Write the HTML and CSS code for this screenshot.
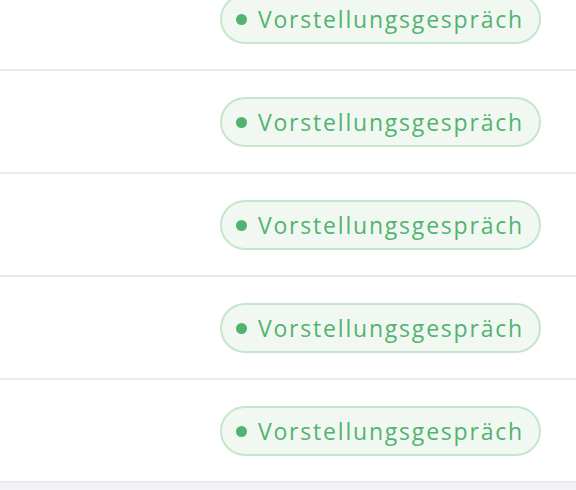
FILE: index.html
```html
<!DOCTYPE html>
<html lang="de">
<head>
<meta charset="utf-8">
<link rel="stylesheet" href="styles.css">
</head>
<body>
<ul class="list">
  <li class="row"><span class="badge"><span class="dot"></span><span class="label">Vorstellungsgespräch</span></span></li>
  <li class="row"><span class="badge"><span class="dot"></span><span class="label">Vorstellungsgespräch</span></span></li>
  <li class="row"><span class="badge"><span class="dot"></span><span class="label">Vorstellungsgespräch</span></span></li>
  <li class="row"><span class="badge"><span class="dot"></span><span class="label">Vorstellungsgespräch</span></span></li>
  <li class="row"><span class="badge"><span class="dot"></span><span class="label">Vorstellungsgespräch</span></span></li>
</ul>
</body>
</html>
```
FILE: styles.css
```css
html, body {
  margin: 0;
  padding: 0;
  background: #f2f3f7;
  font-family: "Open Sans", "Liberation Sans", sans-serif;
  overflow: hidden;
}
.list {
  list-style: none;
  margin: -32px 0 0 0;
  padding: 0;
  background: #ffffff;
}
.row {
  display: flex;
  justify-content: flex-end;
  padding: 26px 35px 25px 0;
  border-bottom: 2px solid #e9e9ee;
}
.badge {
  box-sizing: border-box;
  display: inline-flex;
  align-items: center;
  height: 50px;
  padding: 0 15px 0 14px;
  gap: 11px;
  border: 2px solid #c5e6cd;
  border-radius: 25px;
  background: #f1f8f2;
}
.dot {
  width: 11px;
  height: 11px;
  border-radius: 50%;
  background: #52b370;
}
.label {
  color: #52b370;
  font-size: 23px;
  font-weight: 500;
  letter-spacing: 1.8px;
  line-height: 1;
}
```
